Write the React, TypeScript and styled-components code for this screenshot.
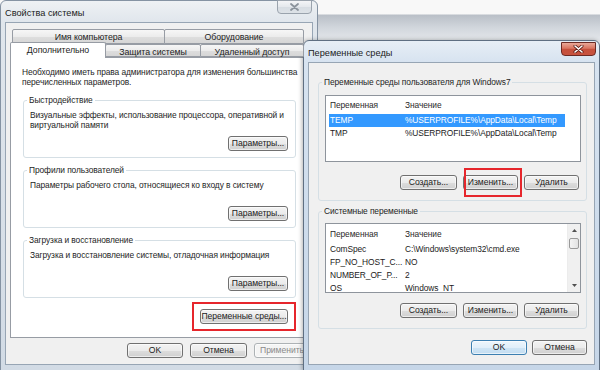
import React from 'react';
import styled, { createGlobalStyle } from 'styled-components';

const GlobalStyle = createGlobalStyle`
  html, body {
    margin: 0;
    padding: 0;
  }
  body {
    font-family: "Liberation Sans", Arial, sans-serif;
    font-size: 8.4px;
    letter-spacing: -0.08px;
    color: #1e1e1e;
  }
`;

const Desktop = styled.div`
  position: relative;
  width: 600px;
  height: 370px;
  overflow: hidden;
  background: linear-gradient(
    to bottom,
    #f8f8f8 0,
    #f8f8f8 14px,
    #b9bfc7 15px,
    #d2d7dd 28px,
    #e3e6ea 40px,
    #e3e6ea 100%
  );
`;

const Window = styled.div<{ $x: number; $y: number; $w: number; $h: number; $active?: boolean }>`
  position: absolute;
  left: ${p => p.$x}px;
  top: ${p => p.$y}px;
  width: ${p => p.$w}px;
  height: ${p => p.$h}px;
  box-sizing: border-box;
  display: flex;
  flex-direction: column;
  padding: 0 4px 5px;
  border: 1px solid ${p => (p.$active ? '#5f6f82' : '#8593a3')};
  border-radius: 6px 6px 0 0;
  background: ${p =>
    p.$active
      ? 'linear-gradient(to bottom, #e7eef6 0, #d7e3f0 21px, #c6d6e8 100%)'
      : 'linear-gradient(to bottom, #eef1f4 0, #e0e6ec 21px, #d2dbe5 100%)'};
  box-shadow: ${p => (p.$active ? '-1px 0 4px rgba(0, 0, 0, 0.3)' : 'none')};
`;

const TitleBar = styled.div`
  display: flex;
  justify-content: space-between;
  align-items: flex-start;
  height: 21px;
  flex: none;
`;

const Title = styled.span`
  padding-top: 6px;
  font-size: 9.2px;
  letter-spacing: 0;
  line-height: 12px;
  color: #1b1b1b;
`;

const CloseButton = styled.div<{ $active?: boolean }>`
  box-sizing: border-box;
  width: 35px;
  height: 14px;
  margin-top: ${p => (p.$active ? '1px' : '-1px')};
  margin-right: ${p => (p.$active ? '-1px' : '1px')};
  display: flex;
  align-items: center;
  justify-content: center;
  border: 1px solid ${p => (p.$active ? '#6c2a24' : '#9aa3ad')};
  border-radius: 0 0 4px 4px;
  background: ${p =>
    p.$active
      ? 'linear-gradient(to bottom, #e9a898 0%, #d8735f 45%, #c6503c 50%, #c7533f 100%)'
      : 'linear-gradient(to bottom, #f4f5f7 0%, #e4e8ec 50%, #d7dde3 51%, #dde2e7 100%)'};
`;

const Client = styled.div<{ $pad: string }>`
  flex: 1;
  min-height: 0;
  display: flex;
  flex-direction: column;
  padding: ${p => p.$pad};
  background: #f0f0f0;
  border: 1px solid #97a5b4;
`;

/* ---------- tabs ---------- */

const TabRow = styled.div<{ $h: number; $indent?: number }>`
  display: flex;
  align-items: flex-start;
  height: ${p => p.$h}px;
  padding-left: ${p => p.$indent ?? 0}px;
`;

const Tab = styled.div<{ $w: number; $selected?: boolean }>`
  position: relative;
  z-index: ${p => (p.$selected ? 2 : 1)};
  box-sizing: border-box;
  width: ${p => p.$w}px;
  height: ${p => (p.$selected ? '16px' : '100%')};
  margin-top: ${p => (p.$selected ? '-2px' : '0')};
  margin-right: -1px;
  padding-top: 1px;
  border: 1px solid #979ca4;
  border-bottom: ${p => (p.$selected ? 'none' : '1px solid #979ca4')};
  border-radius: 2px 2px 0 0;
  background: ${p =>
    p.$selected ? '#ffffff' : 'linear-gradient(to bottom, #f6f6f6 0%, #ececec 50%, #dedede 51%, #d6d6d6 100%)'};
  font-size: 8.8px;
  text-align: center;
  line-height: 12px;
  white-space: nowrap;
`;

const TabPanel = styled.div`
  box-sizing: border-box;
  height: 281px;
  display: flex;
  flex-direction: column;
  padding: 9px 11px 0 11px;
  border: 1px solid #979ca4;
  background: #ffffff;
`;

const Text = styled.p<{ $minH?: number }>`
  margin: 0;
  line-height: 10px;
  white-space: nowrap;
  min-height: ${p => p.$minH ?? 0}px;
`;

/* ---------- group boxes ---------- */

const Group = styled.fieldset<{ $mt: number; $pad: string; $ml?: number }>`
  margin: ${p => p.$mt}px 0 0 ${p => p.$ml ?? 0}px;
  padding: ${p => p.$pad};
  min-width: 0;
  border: 1px solid #d5dfe5;
  border-radius: 3px;
`;

const GroupLabel = styled.legend`
  margin-left: -3px;
  padding: 0 2px;
  line-height: 10px;
  white-space: nowrap;
`;

const ButtonRow = styled.div<{ $mt: number; $gap: number; $pr?: number }>`
  display: flex;
  justify-content: flex-end;
  gap: ${p => p.$gap}px;
  margin-top: ${p => p.$mt}px;
  padding-right: ${p => p.$pr ?? 0}px;
`;

const Button = styled.button<{ $w: number; $kind?: 'default' | 'disabled' }>`
  box-sizing: border-box;
  width: ${p => p.$w}px;
  height: 15px;
  padding: 0;
  font-family: inherit;
  font-size: 8.6px;
  letter-spacing: -0.05px;
  line-height: 13px;
  white-space: nowrap;
  color: ${p => (p.$kind === 'disabled' ? '#8a8a8a' : '#1b1b1b')};
  border: 1px solid
    ${p => (p.$kind === 'default' ? '#3c7fb1' : p.$kind === 'disabled' ? '#adb2b5' : '#707070')};
  border-radius: 3px;
  background: ${p =>
    p.$kind === 'default'
      ? 'linear-gradient(to bottom, #eef6fc 0%, #e1effa 50%, #cfe5f5 51%, #c3ddf1 100%)'
      : p.$kind === 'disabled'
      ? '#f4f4f4'
      : 'linear-gradient(to bottom, #f3f3f3 0%, #ebebeb 50%, #dddddd 51%, #d0d0d0 100%)'};
  box-shadow: inset 0 0 0 1px rgba(255, 255, 255, 0.6);
`;

/* ---------- red annotation ---------- */

const Marked = styled.div`
  position: relative;
  display: flex;
`;

const RedFrame = styled.div<{ $inset: string }>`
  position: absolute;
  inset: ${p => p.$inset};
  border: 2px solid #e6262c;
  pointer-events: none;
`;

/* ---------- list view ---------- */

const ListView = styled.div<{ $h: number }>`
  box-sizing: border-box;
  height: ${p => p.$h}px;
  display: flex;
  border: 1px solid #8e949c;
  background: #ffffff;
  overflow: hidden;
`;

const ListBody = styled.div`
  flex: 1;
  min-width: 0;
`;

const ListHeader = styled.div<{ $h: number }>`
  display: grid;
  grid-template-columns: 75px 1fr;
  align-items: center;
  height: ${p => p.$h}px;
  padding-left: 4px;
  color: #2b2b2b;
  white-space: nowrap;
`;

const ListRow = styled.div<{ $selected?: boolean }>`
  display: grid;
  grid-template-columns: 75px 1fr;
  width: 236px;
  height: 13px;
  margin-left: 3px;
  padding-left: 1px;
  box-sizing: border-box;
  line-height: 13px;
  white-space: nowrap;
  overflow: hidden;
  background: ${p => (p.$selected ? '#3399ff' : 'transparent')};
  color: ${p => (p.$selected ? '#ffffff' : '#1b1b1b')};
`;

const Scrollbar = styled.div`
  width: 12px;
  flex: none;
  display: flex;
  flex-direction: column;
  background: #f0f0f0;
  border-left: 1px solid #ececec;
`;

const ScrollArrow = styled.div`
  height: 13px;
  display: flex;
  align-items: center;
  justify-content: center;
`;

const ScrollTrack = styled.div`
  flex: 1;
  padding: 1px 1px 0;
`;

const ScrollThumb = styled.div`
  height: 11px;
  box-sizing: border-box;
  border: 1px solid #9a9a9a;
  border-radius: 2px;
  background: linear-gradient(to right, #f4f4f4, #e3e3e3);
`;

/* ---------- icons ---------- */

function CloseGlyph({ active }: { active?: boolean }) {
  return (
    <svg width="11" height="8" viewBox="0 0 11 8">
      {active && <path d="M2 1 L9 7 M9 1 L2 7" stroke="#5a1a14" strokeWidth="3" strokeLinecap="round" />}
      <path
        d="M2 1 L9 7 M9 1 L2 7"
        stroke={active ? '#ffffff' : '#8b939c'}
        strokeWidth={active ? 1.6 : 1.8}
        strokeLinecap="round"
      />
    </svg>
  );
}

function Arrow({ up }: { up?: boolean }) {
  return (
    <svg width="5" height="3" viewBox="0 0 5 3">
      <path d={up ? 'M0 3 L2.5 0 L5 3 Z' : 'M0 0 L2.5 3 L5 0 Z'} fill="#505050" />
    </svg>
  );
}

/* ---------- data ---------- */

const perfGroups = [
  {
    title: 'Быстродействие',
    text: ['Визуальные эффекты, использование процессора, оперативной и', 'виртуальной памяти'],
    mt: 8,
  },
  {
    title: 'Профили пользователей',
    text: ['Параметры рабочего стола, относящиеся ко входу в систему'],
    mt: 7,
  },
  {
    title: 'Загрузка и восстановление',
    text: ['Загрузка и восстановление системы, отладочная информация'],
    mt: 7,
  },
];

const userVars = [
  { name: 'TEMP', value: '%USERPROFILE%\\AppData\\Local\\Temp', selected: true },
  { name: 'TMP', value: '%USERPROFILE%\\AppData\\Local\\Temp' },
];

const systemVars = [
  { name: 'ComSpec', value: 'C:\\Windows\\system32\\cmd.exe' },
  { name: 'FP_NO_HOST_C...', value: 'NO' },
  { name: 'NUMBER_OF_P...', value: '2' },
  { name: 'OS', value: 'Windows_NT' },
];

function VarButtons({ mt, marked }: { mt: number; marked?: boolean }) {
  return (
    <ButtonRow $mt={mt} $gap={6} $pr={2}>
      <Button $w={57}>Создать...</Button>
      {marked ? (
        <Marked>
          <Button $w={55}>Изменить...</Button>
          <RedFrame $inset="-7px -4px -7px 1px" />
        </Marked>
      ) : (
        <Button $w={55}>Изменить...</Button>
      )}
      <Button $w={55}>Удалить</Button>
    </ButtonRow>
  );
}

function SystemProperties() {
  return (
    <Window $x={0} $y={0} $w={318} $h={371}>
      <TitleBar>
        <Title>Свойства системы</Title>
        <CloseButton>
          <CloseGlyph />
        </CloseButton>
      </TitleBar>
      <Client $pad="6px 4px 0 4px">
        <TabRow $h={15} $indent={2}>
          <Tab $w={153}>Имя компьютера</Tab>
          <Tab $w={140}>Оборудование</Tab>
        </TabRow>
        <TabRow $h={13}>
          <Tab $w={96} $selected>
            Дополнительно
          </Tab>
          <Tab $w={96}>Защита системы</Tab>
          <Tab $w={104}>Удаленный доступ</Tab>
        </TabRow>
        <TabPanel>
          <Text>
            Необходимо иметь права администратора для изменения большинства
            <br />
            перечисленных параметров.
          </Text>
          {perfGroups.map(g => (
            <Group key={g.title} $mt={g.mt} $ml={1} $pad="5px 7px 6px 6px">
              <GroupLabel>{g.title}</GroupLabel>
              <Text $minH={20}>
                {g.text.map((line, i) => (
                  <React.Fragment key={i}>
                    {i > 0 && <br />}
                    {line}
                  </React.Fragment>
                ))}
              </Text>
              <ButtonRow $mt={6} $gap={0}>
                <Button $w={60}>Параметры...</Button>
              </ButtonRow>
            </Group>
          ))}
          <ButtonRow $mt={11} $gap={0} $pr={8}>
            <Marked>
              <Button $w={88}>Переменные среды...</Button>
              <RedFrame $inset="-7px -8px -7px -8px" />
            </Marked>
          </ButtonRow>
        </TabPanel>
        <ButtonRow $mt={5} $gap={7} style={{ marginRight: -2 }}>
          <Button $w={56}>OK</Button>
          <Button $w={57}>Отмена</Button>
          <Button $w={56} $kind="disabled">
            Применить
          </Button>
        </ButtonRow>
      </Client>
    </Window>
  );
}

function EnvironmentVariables() {
  return (
    <Window $x={303} $y={40} $w={297} $h={331} $active>
      <TitleBar>
        <Title>Переменные среды</Title>
        <CloseButton $active>
          <CloseGlyph active />
        </CloseButton>
      </TitleBar>
      <Client $pad="14px 7px 0 9px">
        <Group $mt={0} $pad="8px 5px 10px 6px">
          <GroupLabel>Переменные среды пользователя для Windows7</GroupLabel>
          <ListView $h={67}>
            <ListBody>
              <ListHeader $h={18}>
                <span>Переменная</span>
                <span>Значение</span>
              </ListHeader>
              {userVars.map(v => (
                <ListRow key={v.name} $selected={v.selected}>
                  <span>{v.name}</span>
                  <span>{v.value}</span>
                </ListRow>
              ))}
            </ListBody>
          </ListView>
          <VarButtons mt={13} marked />
        </Group>
        <Group $mt={5} $pad="7px 5px 10px 6px">
          <GroupLabel>Системные переменные</GroupLabel>
          <ListView $h={70}>
            <ListBody>
              <ListHeader $h={19}>
                <span>Переменная</span>
                <span>Значение</span>
              </ListHeader>
              {systemVars.map(v => (
                <ListRow key={v.name}>
                  <span>{v.name}</span>
                  <span>{v.value}</span>
                </ListRow>
              ))}
            </ListBody>
            <Scrollbar>
              <ScrollArrow>
                <Arrow up />
              </ScrollArrow>
              <ScrollTrack>
                <ScrollThumb />
              </ScrollTrack>
              <ScrollArrow>
                <Arrow />
              </ScrollArrow>
            </Scrollbar>
          </ListView>
          <VarButtons mt={10} />
        </Group>
        <ButtonRow $mt={11} $gap={5}>
          <Button $w={56} $kind="default">
            OK
          </Button>
          <Button $w={55}>Отмена</Button>
        </ButtonRow>
      </Client>
    </Window>
  );
}

export default function App() {
  return (
    <>
      <GlobalStyle />
      <Desktop>
        <SystemProperties />
        <EnvironmentVariables />
      </Desktop>
    </>
  );
}
